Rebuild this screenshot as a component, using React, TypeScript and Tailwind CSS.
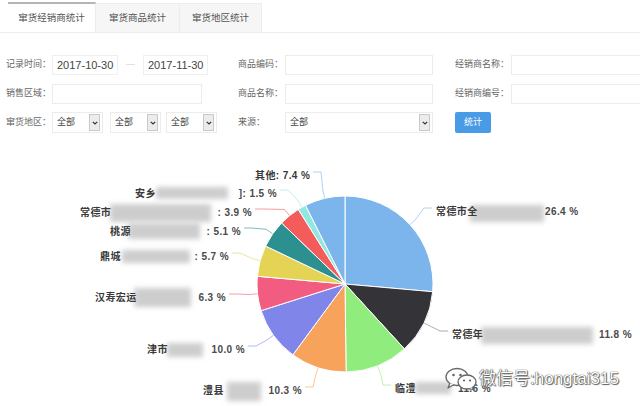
import React from "react";

const CX = 345;
const CY = 284;
const R = 88;

type Slice = { p: number; color: string };
const slices: Slice[] = [
  { p: 26.4, color: "#7cb5ec" },
  { p: 11.8, color: "#333338" },
  { p: 11.6, color: "#90ed7d" },
  { p: 10.3, color: "#f7a35c" },
  { p: 10.0, color: "#8085e9" },
  { p: 6.3, color: "#f15c80" },
  { p: 5.7, color: "#e4d354" },
  { p: 5.1, color: "#2b908f" },
  { p: 3.9, color: "#f45b5b" },
  { p: 1.5, color: "#91e8e1" },
  { p: 7.4, color: "#7cb5ec" },
];

function pt(a: number, r: number) {
  const t = 2 * Math.PI * a;
  return [CX + r * Math.sin(t), CY - r * Math.cos(t)];
}

function arcPath(a0: number, a1: number) {
  const [x0, y0] = pt(a0, R);
  const [x1, y1] = pt(a1, R);
  const large = a1 - a0 > 0.5 ? 1 : 0;
  return `M${CX},${CY} L${x0},${y0} A${R},${R} 0 ${large} 1 ${x1},${y1} Z`;
}

type Label = {
  idx: number;
  y: number;
  side: "l" | "r";
  pre: string;
  preX: number;
  blur?: [number, number, number, number];
  suf: string;
  sufX: number;
};

const labels: Label[] = [
  { idx: 0, y: 211, side: "r", pre: "常德市全", preX: 436, blur: [470, 205, 74, 17], suf: "26.4 %", sufX: 545 },
  { idx: 1, y: 334, side: "r", pre: "常德年", preX: 452, blur: [481, 327, 112, 17], suf: "11.8 %", sufX: 599 },
  { idx: 2, y: 388, side: "r", pre: "临澧", preX: 395, blur: [415, 382, 36, 12], suf: "11.6 %", sufX: 458 },
  { idx: 3, y: 390, side: "l", pre: "澧县", preX: 203, blur: [227, 382, 34, 19], suf: "10.3 %", sufX: 302 },
  { idx: 4, y: 349, side: "l", pre: "津市", preX: 147, blur: [167, 343, 36, 14], suf: "10.0 %", sufX: 245 },
  { idx: 5, y: 297, side: "l", pre: "汉寿宏运", preX: 95, blur: [134, 288, 57, 19], suf: "6.3 %", sufX: 226 },
  { idx: 6, y: 256, side: "l", pre: "鼎城", preX: 100, blur: [122, 250, 68, 13], suf: ": 5.7 %", sufX: 229 },
  { idx: 7, y: 231, side: "l", pre: "桃源", preX: 110, blur: [128, 223, 72, 16], suf: ": 5.1 %", sufX: 241 },
  { idx: 8, y: 212, side: "l", pre: "常德市", preX: 80, blur: [110, 204, 101, 18], suf: ": 3.9 %", sufX: 252 },
  { idx: 9, y: 193, side: "l", pre: "安乡", preX: 135, blur: [156, 187, 72, 12], suf: "]: 1.5 %", sufX: 277 },
  { idx: 10, y: 175, side: "l", pre: "其他: 7.4 %", preX: 255, suf: "", sufX: 310 },
];

function connector(l: Label, mid: number) {
  const [ex, ey] = pt(mid, R - 2);
  const [ox, oy] = pt(mid, R + 8);
  const ax = l.side === "r" ? l.preX - 4 : l.sufX + 3;
  const bx = l.side === "r" ? ax - 8 : ax + 8;
  const y = l.y - 3;
  return `M${ax},${y} L${bx},${y} L${ox},${oy} L${ex},${ey}`;
}

function PieChart() {
  let acc = 0;
  const ranges = slices.map((s) => {
    const a0 = acc / 100;
    acc += s.p;
    return [a0, acc / 100];
  });
  return (
    <svg width="640" height="260" viewBox="0 146 640 260" className="block shrink-0">
      <defs>
        <filter id="bl" x="-30%" y="-60%" width="160%" height="220%">
          <feGaussianBlur stdDeviation="2.4" />
        </filter>
      </defs>
      {labels.map((l) => {
        const [a0, a1] = ranges[l.idx];
        return (
          <path
            key={"c" + l.idx}
            d={connector(l, (a0 + a1) / 2)}
            fill="none"
            stroke={l.idx === 1 ? "#777" : slices[l.idx].color}
            strokeOpacity={0.6}
            strokeWidth={1}
          />
        );
      })}
      {slices.map((s, i) => (
        <path key={i} d={arcPath(ranges[i][0], ranges[i][1])} fill={s.color} stroke="#ffffff" strokeWidth={1} />
      ))}
      <g
        fontFamily="'Liberation Sans','Noto Sans CJK SC',sans-serif"
        fontSize="10"
        fontWeight="bold"
        fill="#3a3a3a"
        letterSpacing="0.4"
      >
        {labels.map((l) => (
          <g key={"l" + l.idx}>
            {l.blur && (
              <rect
                x={l.blur[0]}
                y={l.blur[1]}
                width={l.blur[2]}
                height={l.blur[3]}
                fill="#cdcdcd"
                filter="url(#bl)"
              />
            )}
            <text x={l.preX} y={l.y + 3.5}>
              {l.pre}
            </text>
            {l.suf && (
              <text x={l.sufX} y={l.y + 3.5} textAnchor={l.side === "r" ? "start" : "end"} fill="#4a4a4a">
                {l.suf}
              </text>
            )}
          </g>
        ))}
      </g>
    </svg>
  );
}

function Arrow() {
  return (
    <div className="ml-auto mr-[2px] flex h-[17px] w-[11px] shrink-0 items-center justify-center border border-[#c9c9c9] bg-[#ececec]">
      <svg width="6" height="4" viewBox="0 0 6 4">
        <path d="M0.8 0.8 L3 3 L5.2 0.8" fill="none" stroke="#333" strokeWidth="1.2" />
      </svg>
    </div>
  );
}

function Select({ w }: { w: string }) {
  return (
    <div className={`flex h-[21px] shrink-0 items-center border border-[#ececec] pl-[4px] text-[#444] ${w}`}>
      <span className="whitespace-nowrap">全部</span>
      <Arrow />
    </div>
  );
}

function WeChatIcon() {
  return (
    <svg width="34" height="24" viewBox="0 0 34 24">
      <ellipse cx="13" cy="10" rx="11" ry="8.5" fill="#fff" stroke="#666" strokeWidth="1.3" />
      <path d="M6 16 L4 21 L10 17.5" fill="#fff" stroke="#666" strokeWidth="1.3" strokeLinejoin="round" />
      <circle cx="9.5" cy="8" r="1.3" fill="#666" />
      <circle cx="16.5" cy="8" r="1.3" fill="#666" />
      <ellipse cx="23" cy="15" rx="9" ry="7" fill="#fff" stroke="#666" strokeWidth="1.3" />
      <path d="M28 20 L30 23 L25 21.5" fill="#fff" stroke="#666" strokeWidth="1.3" strokeLinejoin="round" />
      <circle cx="20" cy="13.5" r="1.1" fill="#666" />
      <circle cx="26" cy="13.5" r="1.1" fill="#666" />
    </svg>
  );
}

export default function App() {
  return (
    <div className="relative flex h-[406px] w-[640px] flex-col overflow-hidden bg-white font-['Liberation_Sans','Noto_Sans_CJK_SC',sans-serif] text-[9px] text-[#666]">
      {/* Tabs */}
      <div className="flex h-[33px] shrink-0 items-end border-b border-[#ececec] pl-[8px] text-[9.5px]">
        <div className="flex h-[30px] w-[88px] items-center justify-center whitespace-nowrap border-t-2 border-r border-t-[#b5b5b5] border-r-[#ececec] bg-white text-[#555]">
          窜货经销商统计
        </div>
        <div className="flex h-[29px] w-[84px] items-center justify-center whitespace-nowrap border-t border-r border-[#ececec] bg-[#f6f6f7] text-[#555]">
          窜货商品统计
        </div>
        <div className="flex h-[29px] w-[82px] items-center justify-center whitespace-nowrap border-t border-r border-[#ececec] bg-[#f6f6f7] text-[#555]">
          窜货地区统计
        </div>
      </div>

      {/* Row 1 */}
      <div className="mt-[22px] flex h-[20px] shrink-0 items-center whitespace-nowrap pl-[6px]">
        <div className="w-[46px] shrink-0">记录时间：</div>
        <div className="flex h-[20px] w-[66px] shrink-0 items-center border border-[#efefef] pl-[4px] text-[11px] text-[#444]">
          2017-10-30
        </div>
        <div className="flex w-[25px] shrink-0 justify-center text-[#ccc]">—</div>
        <div className="flex h-[20px] w-[65px] shrink-0 items-center border border-[#efefef] pl-[4px] text-[11px] text-[#444]">
          2017-11-30
        </div>
        <div className="ml-[30px] w-[47px] shrink-0">商品编码：</div>
        <div className="h-[20px] w-[148px] shrink-0 border border-[#ececec]" />
        <div className="ml-[22px] w-[56px] shrink-0">经销商名称：</div>
        <div className="h-[20px] w-[160px] shrink-0 border border-[#ececec]" />
      </div>

      {/* Row 2 */}
      <div className="mt-[9px] flex h-[20px] shrink-0 items-center whitespace-nowrap pl-[6px]">
        <div className="w-[46px] shrink-0">销售区域：</div>
        <div className="h-[20px] w-[150px] shrink-0 border border-[#ececec]" />
        <div className="ml-[36px] w-[47px] shrink-0">商品名称：</div>
        <div className="h-[20px] w-[148px] shrink-0 border border-[#ececec]" />
        <div className="ml-[22px] w-[56px] shrink-0">经销商编号：</div>
        <div className="h-[20px] w-[160px] shrink-0 border border-[#ececec]" />
      </div>

      {/* Row 3 */}
      <div className="mt-[8px] flex h-[21px] shrink-0 items-center whitespace-nowrap pl-[6px]">
        <div className="w-[46px] shrink-0">窜货地区：</div>
        <Select w="w-[51px]" />
        <div className="ml-[7px]">
          <Select w="w-[51px]" />
        </div>
        <div className="ml-[5px]">
          <Select w="w-[51px]" />
        </div>
        <div className="ml-[21px] w-[47px] shrink-0">来源：</div>
        <Select w="w-[148px]" />
        <div className="ml-[22px] flex h-[21px] w-[36px] shrink-0 items-center justify-center rounded-[2px] bg-[#4a9be6] text-white">
          统计
        </div>
      </div>

      <div className="mt-[13px] shrink-0">
        <PieChart />
      </div>

      {/* Watermark */}
      <div className="absolute left-[444px] top-[366px] flex items-center gap-[1px]">
        <WeChatIcon />
        <span className="whitespace-nowrap text-[17px] text-white [text-shadow:0_0_1px_#444,0_0_1px_#444,1px_1px_1px_#666]">
          微信号:hongtai315
        </span>
      </div>
    </div>
  );
}
